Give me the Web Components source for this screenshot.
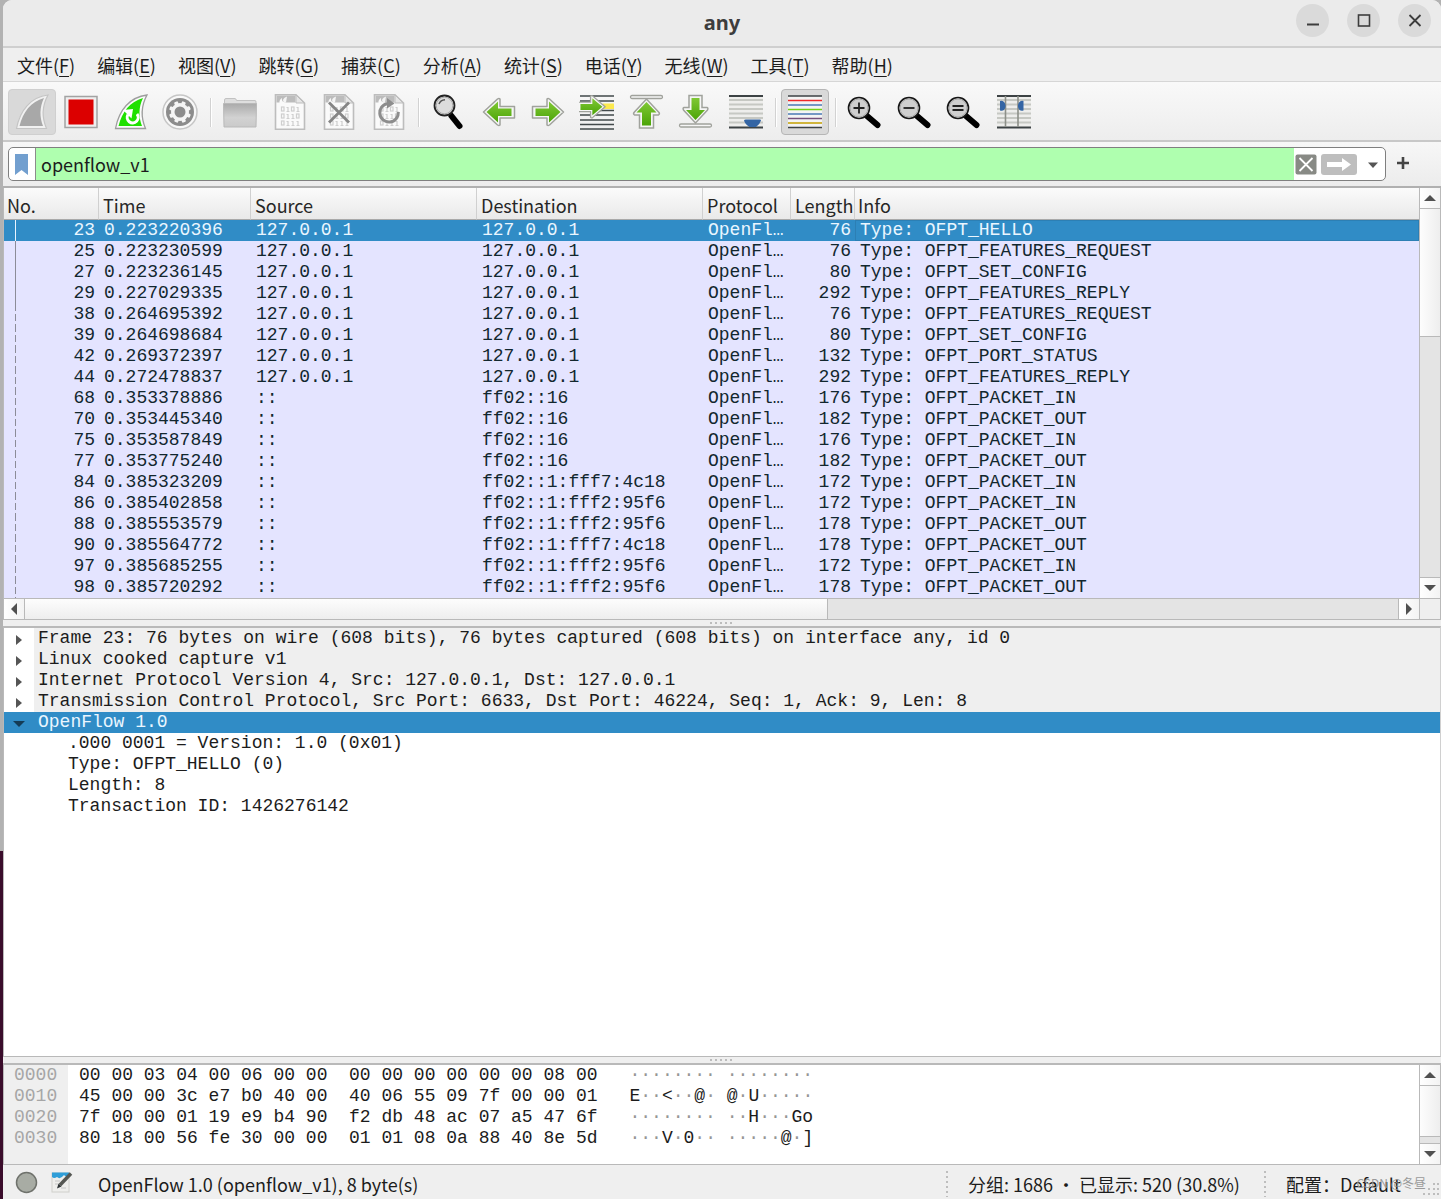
<!DOCTYPE html>
<html lang="zh-CN">
<head>
<meta charset="utf-8">
<title>any</title>
<style>
  html, body { height: 100%; }
  body {
    margin: 0;
    background: linear-gradient(#b2b2b2 0 71%, #3a0c2b 71%);
    font: 18px/26px "Noto Sans CJK SC", "Noto Sans", sans-serif;
    color: #1c1c1c;
    --mono: 18px/21px "Liberation Mono", "Noto Sans CJK SC", monospace;
    --blue: #308cc6;
    --line: #b9b9b9;
    --face: #efefef;
  }
</style>
</head>
<body>
<app-window></app-window>

<script>
const define = (name, html, setup) => {
  const template = document.createElement('template');
  template.innerHTML = `<style>
    *, :host { box-sizing: border-box; }
    button, input, select { font: inherit; color: inherit; margin: 0; padding: 0; border: 0; background: none; }
    svg { display: block; }
  </style>` + html;
  customElements.define(name, class extends HTMLElement {
    connectedCallback() {
      if (this.shadowRoot) return;
      const root = this.attachShadow({ mode: 'open' });
      root.append(template.content.cloneNode(true));
      if (setup) setup(root, this);
    }
  });
};

/* ---------- icons ---------- */
const fin = 'M2.5 34.5C6 16 17 3 34 1C28 12 28 24 32.5 34.5Z';
const finIn = 'M5.5 32C9 18 17 7.5 30 4C25.500 13 25.500 23 29 32Z';
const page = `<path d="M3.500 .8H24L32.500 9V35.200H3.500Z" fill="#fafafa" stroke="#bdbdbd" stroke-width="1.600"/>
  <path d="M4.500 1.500H23.500V8.500H14Q9 8 10 4Q7 6 7.500 8.500H4.500Z" fill="#bcbcbc"/>
  <path d="M12 8.500Q9 5 15 2.500L14 8.500Z" fill="#f4f4f4"/>
  <path d="M24 1V9H32Z" fill="#e6e6e6" stroke="#bdbdbd"/>
  <g fill="none" stroke="#cfcfcf" stroke-width="1.200">
  ${[13, 20, 27].map((y, r) => [9.5, 14.5, 19.5, 24.5].map((x, c) =>
    ['0101', '0110', '0111'][r][c] === '0' ? `<rect x="${x}" y="${y}" width="2.500" height="4"/>` : `<path d="M${x} ${y + .5}h1.500v4m-1.500 0h3"/>`).join('')).join('')}
  </g>`;
const right = 'M1.500 12.500H16V5Q17 4 18.500 5L32.500 18L18.500 31Q17 32 16 31V24H1.500Z';
const rightIn = 'M4.500 14.500H18V7.500L29.500 18L18 28.500V22H4.500Z';
const arrow = t => `<g transform="${t}"><path d="${right}" fill="#f6f6f6" stroke="#a0a29c" stroke-width="1.500" stroke-linejoin="round"/><path d="${rightIn}" fill="url(#g)"/></g>`;
const grad = '<defs><linearGradient id="g" x1="0" y1="0" x2="0" y2="1"><stop offset="0" stop-color="#80c835"/><stop offset="1" stop-color="#4ba407"/></linearGradient></defs>';
const lines = (ys, col, w = 2) => `<path d="${ys.map(y => `M1 ${y}H35`).join('')}" stroke="${col}" stroke-width="${w}"/>`;
const lens = inner => `<path d="M20 22L30.500 31" stroke="#000" stroke-width="6" stroke-linecap="round"/><circle cx="12" cy="14" r="10.500" fill="#cfcfcf" stroke="#161616" stroke-width="1.600"/><circle cx="12" cy="14" r="9" fill="none" stroke="#aaa"/><path d="${inner}" stroke="#222" stroke-width="1.800"/>`;
const teeth = Array.from({ length: 8 }, (_, i) => `<rect x="16" y="7" width="4" height="6" rx="1" transform="rotate(${i * 45 + 22} 18 18)"/>`).join('');

const ICONS = {
  start: `<path d="${fin}" fill="#f1f1f1" stroke="#c4c4c4" stroke-width="1.200"/><path d="${finIn}" fill="#a8a8a8"/>`,
  stop: `<rect x="2" y="2.500" width="32" height="31" fill="#efefef" stroke="#a3a3a3" stroke-width="1.500"/><rect x="5.500" y="5.500" width="25" height="25" fill="#dc0000"/>`,
  restart: `<path d="${fin}" fill="#fafafa" stroke="#9d9d9d" stroke-width="1.300"/><path d="${finIn}" fill="#1fe000"/>
    <path d="M15 20.500A5.500 5.500 0 1 0 24 20" fill="none" stroke="#fff" stroke-width="3"/><path d="M10 16L20 15L18.500 24.500Z" fill="#fff"/>`,
  options: `<circle cx="18" cy="18" r="17" fill="#f8f8f8" stroke="#c6c6c6" stroke-width="1.500"/><circle cx="18" cy="18" r="14" fill="#8c8c8c"/><g fill="#f5f5f5">${teeth}<circle cx="18" cy="18" r="9"/></g><circle cx="18" cy="18" r="5.500" fill="#8c8c8c"/>`,
  open: `<defs><linearGradient id="f" x1="0" y1="0" x2="0" y2="1"><stop offset="0" stop-color="#aaa"/><stop offset=".6" stop-color="#d2d2d2"/><stop offset="1" stop-color="#cacaca"/></linearGradient></defs>
    <path d="M2.500 12V6Q2.500 4.500 4 4.500H13Q14 4.500 14.500 6.500H33Q34 6.500 34 8V12Z" fill="#dedede" stroke="#c2c2c2"/><path d="M1.500 9.500H34.500L34 33H2Z" fill="url(#f)" stroke="#b9b9b9"/>`,
  save: page,
  close: page + '<path d="M8 8.500L28 28.500M28 8.500L8 28.500" stroke="#858585" stroke-width="2.800"/>',
  reload: page + '<path d="M17 9.500A9.300 9.300 0 1 0 27.300 18" fill="none" stroke="#8d8d8d" stroke-width="3"/><path d="M16 4L23.500 9.500L16 14.500Z" fill="#8d8d8d"/>',
  find: `<path d="M20.500 22L28.500 32" stroke="#000" stroke-width="6" stroke-linecap="round"/><circle cx="13.500" cy="11.500" r="10" fill="#dcdcdc" stroke="#222" stroke-width="1.800"/><circle cx="13.500" cy="11.500" r="8.300" fill="none" stroke="#aaa"/><path d="M8 10Q9.500 6 14 5.800" fill="none" stroke="#555" stroke-width="1.500"/>`,
  back: grad + arrow('matrix(-1 0 0 1 36 0)'),
  forward: grad + arrow('translate(1 0)'),
  goto: grad + lines([2, 7, 16.500, 21, 26, 30.500, 35], '#42494b', 1.6) + '<rect x="24" y="9.500" width="11" height="5.500" fill="#fce94f"/>' + arrow('translate(-2.500 -2) scale(.88 .82)'),
  first: grad + '<rect x="1.500" y="1.500" width="32" height="3" rx="1.500" fill="#f6f6f6" stroke="#a0a29c" stroke-width="1.300"/><path d="M10.500 34V21H5.500Q4 20 5 18.500L17.500 5L30 18.500Q31 20 29.500 21H24.500V34Z" fill="#f6f6f6" stroke="#a0a29c" stroke-width="1.500"/><path d="M13 31.500V18.500H7.500L17.500 8L27.500 18.500H22V31.500Z" fill="url(#g)"/>',
  last: grad + '<rect x="1.500" y="30" width="32" height="3" rx="1.500" fill="#f6f6f6" stroke="#a0a29c" stroke-width="1.300"/><path d="M11 1.500V13.500H6Q4.500 14 5.500 16L17.500 29L29.500 16Q30.500 14 29 13.500H24V1.500Z" fill="#f6f6f6" stroke="#a0a29c" stroke-width="1.500"/><path d="M13.500 4V16H8L17.500 26L27 16H21.500V4Z" fill="url(#g)"/>',
  autoscroll: '<rect x="1" y="2" width="34" height="31" fill="#eeeeec"/>' + lines([6, 10.500, 15, 19.500, 24, 28.500], '#c6c8c3', 1.8) + lines([2, 33.500], '#3c4244', 1.8) + '<path d="M16 26.500Q16.500 25 19 25.500H31Q33 25 33 26.500Q32 30 28 33H21.500Q17 30 16 26.500Z" fill="#3465a4"/>',
  colorize: '<rect x="1" y="2" width="34" height="31" fill="#f4f4f4"/>' + [[2, '#3c4244'], [6.5, '#ef2929'], [11, '#4a7ab5'], [15.5, '#73d216'], [20, '#4a7ab5'], [24.5, '#75507b'], [29, '#c4a000'], [33.5, '#3c4244']].map(([y, c]) => lines([y], c, 1.7)).join(''),
  zoomin: lens('M12 8.500V19.500M6.500 14H17.500'),
  zoomout: lens('M6.500 14H17.500'),
  zoomreset: lens('M6.500 12H17.500M6.500 16H17.500'),
  resize: '<rect x="1" y="2" width="34" height="31" fill="#eeeeec"/>' + lines([6, 10.500, 15, 19.500, 24, 28.500], '#c6c8c3', 1.8) + lines([2, 33.500], '#3c4244', 1.8) + '<path d="M9.500 2V33M22 2V33" stroke="#8d9089" stroke-width="1.600"/><path d="M4 7Q8 6 9.500 11V13Q8 18 4 16.500Z M27.500 7Q23.500 6 22 11V13Q23.500 18 27.500 16.500Z" fill="#3465a4"/>'
};
define('ws-icon', `<style>:host { display: block; width: 36px; height: 36px; }</style><svg width="36" height="36" viewBox="0 0 36 36" aria-hidden="true"></svg>`,
  (root, host) => { root.querySelector('svg').innerHTML = ICONS[host.getAttribute('name')]; });

/* ---------- title bar ---------- */
define('title-bar', `<style>
  :host { display: grid; grid-template-columns: 1fr auto 1fr; align-items: center; height: 48px; padding: 0 10px 5px; background: #ebebeb; border-bottom: 2px solid #cfcfcf; }
  h1 { grid-column: 2; margin: 0; padding-top: 4px; font: bold 20px/28px "Noto Sans", sans-serif; color: #3d3d3d; }
  div { display: flex; justify-content: flex-end; gap: 18px; }
  button { width: 33px; height: 33px; border-radius: 50%; background: #dadada; }
</style>
<h1><slot></slot></h1>
<div>
  <button aria-label="最小化"><svg width="33" height="33"><path d="M11 20.500h12" stroke="#3d3d3d" stroke-width="2"/></svg></button>
  <button aria-label="最大化"><svg width="33" height="33"><rect x="11.500" y="11" width="11" height="11" fill="none" stroke="#3d3d3d" stroke-width="1.600"/></svg></button>
  <button aria-label="关闭"><svg width="33" height="33"><path d="M11.500 11l11 11m0-11l-11 11" stroke="#3d3d3d" stroke-width="1.800"/></svg></button>
</div>`);

/* ---------- menu bar ---------- */
define('menu-bar', `<style>
  :host { display: flex; gap: 22px; align-items: center; height: 34px; padding: 0 14px; background: var(--face); border-bottom: 1px solid #d6d6d6; }
  u { text-underline-offset: 3px; text-decoration-thickness: 1px; }
  button { white-space: nowrap; }
</style>`, root => {
  ['文件F', '编辑E', '视图V', '跳转G', '捕获C', '分析A', '统计S', '电话Y', '无线W', '工具T', '帮助H'].forEach(t => {
    const b = document.createElement('button');
    b.innerHTML = `${t.slice(0, 2)}(<u>${t[2]}</u>)`;
    root.append(b);
  });
});

/* ---------- main toolbar ---------- */
define('tool-bar', `<style>
  :host { display: block; padding: 7px 5px 5px; background: linear-gradient(#f9f9f9, #ededed); border-bottom: 2px solid #c8c8c8; }
  div { display: flex; justify-content: space-between; align-items: center; max-width: 1030px; }
  button { display: grid; place-items: center; width: 48px; height: 46px; border: 1px solid transparent; border-radius: 4px; }
  button.on { background: #d9d9d9; border-color: #b6b6b6; }
  button.off { background: #d9d9d9; border-color: #cfcfcf; }
  i { width: 9px; height: 29px; background: linear-gradient(90deg, transparent 4px, #d2d2d2 4px 5px, #fff 5px 6px, transparent 6px); }
</style><div></div>`, root => {
  const names = { start: '开始', stop: '停止', restart: '重新开始', options: '选项', open: '打开', save: '保存', close: '关闭', reload: '重新加载', find: '查找', back: '上一个', forward: '下一个', goto: '转到', first: '首个', last: '末个', autoscroll: '自动滚动', colorize: '着色', zoomin: '放大', zoomout: '缩小', zoomreset: '正常大小', resize: '调整列宽' };
  const after = ['options', 'reload', 'autoscroll', 'colorize'];
  root.querySelector('div').innerHTML = Object.entries(names).map(([n, label]) =>
    `<button aria-label="${label}" class="${n === 'colorize' ? 'on' : n === 'start' ? 'off' : ''}"><ws-icon name="${n}"></ws-icon></button>${after.includes(n) ? '<i></i>' : ''}`).join('');
});

/* ---------- display filter ---------- */
define('filter-bar', `<style>
  :host { display: flex; align-items: center; gap: 10px; height: 46px; padding: 0 31px 0 5px; background: linear-gradient(#f7f7f7, #ececec); border-bottom: 2px solid #b0b0b0; }
  .box { flex: 1; display: flex; align-items: center; height: 34px; border: 1px solid #7f7f7f; border-radius: 5px; background: #fff; overflow: hidden; }
  .mark { width: 27px; height: 32px; border-right: 1px solid #8c8c8c; padding-left: 6px; }
  input { flex: 1; min-width: 0; height: 32px; padding: 0 5px; background: #afffaf; outline: 0; }
  .clear { margin-left: 1px; } .apply { margin-left: 4px; } .drop { padding: 0 5px 0 9px; }
</style>
<div class="box">
  <button class="mark" aria-label="书签"><svg width="13" height="21"><path d="M0 0H13V21L6.500 16L0 21Z" fill="#729fcf"/></svg></button>
  <input aria-label="显示过滤器" value="openflow_v1" spellcheck="false">
  <button class="clear" aria-label="清除"><svg width="22" height="21"><rect x=".5" y=".5" width="21" height="20" rx="2" fill="#888a85"/><path d="M4.500 4L17.500 17M17.500 4L4.500 17" stroke="#fff" stroke-width="1.800"/></svg></button>
  <button class="apply" aria-label="应用"><svg width="36" height="21"><rect width="36" height="21" rx="3" fill="#bebebe"/><path d="M6 8H21V4L30 10.500L21 17V13H6Z" fill="#fff"/></svg></button>
  <button class="drop" aria-label="历史"><svg width="14" height="21"><path d="M2 8.500H12L7 14Z" fill="#555"/></svg></button>
</div>
<button aria-label="添加"><svg width="14" height="18"><path d="M7 2V14M1 8H13" stroke="#444" stroke-width="2.600"/></svg></button>`);

/* ---------- scroll bar ---------- */
define('scroll-bar', `<style>
  :host { display: flex; flex-direction: column; width: 22px; background: #e4e4e4; border-left: 1px solid var(--line); border-right: 1px solid var(--line); }
  :host([horizontal]) { flex-direction: row; width: auto; height: 22px; border: 0; border-top: 1px solid var(--line); border-bottom: 1px solid var(--line); }
  button { flex: none; display: grid; place-items: center; width: 20px; height: 20px; background: linear-gradient(90deg, #fff, #f3f3f3); }
  svg { width: 12px; height: 12px; fill: #505050; }
  .track { flex: 1; display: flex; flex-direction: inherit; }
  .thumb { flex: 0 0 var(--size, 50%); background: linear-gradient(90deg, #fdfdfd, #eee); border: 1px solid var(--line); border-width: 1px 0; }
  :host([horizontal]) .thumb { background: linear-gradient(#fdfdfd, #eee); border-width: 0 1px; }
  .end { border-top: 1px solid var(--line); height: 21px; }
  :host([horizontal]) .end { border-top: 0; border-left: 1px solid var(--line); width: 21px; height: 20px; }
  :host([horizontal]) svg { transform: rotate(-90deg); }
</style>
<button aria-label="-" tabindex="-1"><svg viewBox="0 0 12 12"><path d="M0 9H12L6 3Z"/></svg></button>
<div class="track"><div class="thumb"></div></div>
<button class="end" aria-label="+" tabindex="-1"><svg viewBox="0 0 12 12"><path d="M0 3H12L6 9Z"/></svg></button>`);

define('pane-splitter', `<style>
  :host { display: grid; place-items: center; height: 6px; background: var(--face); }
  i { width: 25px; height: 2px; background: repeating-linear-gradient(90deg, #bcbcbc 0 2px, transparent 2px 5px); }
</style><i></i>`);

/* ---------- packet list ---------- */
define('packet-list', `<style>
  :host { display: grid; grid-template-columns: 1fr 22px; background: var(--face); border-left: 1px solid var(--line); }
  table { width: 100%; table-layout: fixed; border-collapse: separate; border-spacing: 0; background: #e4e4ff; font: var(--mono); color: #12272e; }
  th { height: 32px; padding: 2px 0 0 4px; text-align: left; font: 18px/26px "Noto Sans CJK SC", sans-serif; color: #262626; background: linear-gradient(#fbfbfb, #e9e9e9); border-right: 1px solid #d0d0d0; border-bottom: 1px solid #a9a9a9; white-space: nowrap; }
  th:first-child { padding-left: 3px; }
  th:nth-child(7) { border-right: 0; padding-left: 3px; }
  td { height: 21px; padding: 0 0 0 5px; white-space: nowrap; overflow: hidden; }
  td:first-child, td:nth-child(6) { text-align: right; padding: 0 4px 0 0; }
  td:first-child { background: repeating-linear-gradient(#8c8c98 0 7px, transparent 7px 10px) 11px 0 / 1px 100% no-repeat; }
  tr.linked td:first-child { background: linear-gradient(#8c8c98, #8c8c98) 11px 0 / 1px 100% no-repeat; }
  tr.sel { background: var(--blue); color: #eaf6ff; }
  tr.sel td:first-child { background: linear-gradient(#e8f4ff, #e8f4ff) 11px 0 / 1px 100% no-repeat; }
  tr.sel td:last-child { box-shadow: inset 0 0 0 1px #2c7fb4; }
  scroll-bar { --size: 35%; }
  scroll-bar[horizontal] { --size: 58.5%; }
  .corner { border: 1px solid var(--line); }
</style>
<table>
  <colgroup><col style="width:95px"><col style="width:152px"><col style="width:226px"><col style="width:226px"><col style="width:88px"><col style="width:64px"><col></colgroup>
  <thead><tr><th>No.</th><th>Time</th><th>Source</th><th>Destination</th><th>Protocol</th><th>Length</th><th>Info</th></tr></thead>
  <tbody></tbody>
</table>
<scroll-bar></scroll-bar>
<scroll-bar horizontal></scroll-bar>
<div class="corner"></div>`, root => {
  const L = '127.0.0.1', A = 'ff02::1:fff7:4c18', B = 'ff02::1:fff2:95f6', M = 'ff02::16', N = '::';
  const rows = [
    [23, '0.223220396', L, L, 76, 'HELLO'], [25, '0.223230599', L, L, 76, 'FEATURES_REQUEST'],
    [27, '0.223236145', L, L, 80, 'SET_CONFIG'], [29, '0.227029335', L, L, 292, 'FEATURES_REPLY'],
    [38, '0.264695392', L, L, 76, 'FEATURES_REQUEST'], [39, '0.264698684', L, L, 80, 'SET_CONFIG'],
    [42, '0.269372397', L, L, 132, 'PORT_STATUS'], [44, '0.272478837', L, L, 292, 'FEATURES_REPLY'],
    [68, '0.353378886', N, M, 176, 'PACKET_IN'], [70, '0.353445340', N, M, 182, 'PACKET_OUT'],
    [75, '0.353587849', N, M, 176, 'PACKET_IN'], [77, '0.353775240', N, M, 182, 'PACKET_OUT'],
    [84, '0.385323209', N, A, 172, 'PACKET_IN'], [86, '0.385402858', N, B, 172, 'PACKET_IN'],
    [88, '0.385553579', N, B, 178, 'PACKET_OUT'], [90, '0.385564772', N, A, 178, 'PACKET_OUT'],
    [97, '0.385685255', N, B, 172, 'PACKET_IN'], [98, '0.385720292', N, B, 178, 'PACKET_OUT']];
  root.querySelector('tbody').innerHTML = rows.map(([no, t, s, d, len, type], i) =>
    `<tr class="${i === 0 ? 'sel' : i < 4 ? 'linked' : ''}"><td>${no}</td><td>${t}</td><td>${s}</td><td>${d}</td><td>OpenFl…</td><td>${len}</td><td>Type: OFPT_${type}</td></tr>`).join('');
});

/* ---------- packet details ---------- */
define('detail-tree', `<style>
  :host { display: block; background: #fff; border: 1px solid var(--line); border-top-width: 2px; border-right-color: #d0d0d0; font: var(--mono); color: #1c1c1c; overflow: hidden; }
  .row { display: flex; height: 21px; white-space: nowrap; }
  .row button { width: 30px; display: grid; place-items: center; }
  .row span { flex: 1; padding-left: 4px; background: var(--face); }
  .row.sel { background: var(--blue); color: #eaf6ff; }
  .row.sel span { background: none; }
  .leaf { padding-left: 64px; height: 21px; white-space: nowrap; }
</style>
<div role="tree"></div>`, root => {
  const closed = '<svg width="12" height="14"><path d="M3 3V13L9 8Z" fill="#555"/></svg>';
  const open = '<svg width="12" height="14"><path d="M0 5H12L6 11Z" fill="#143c56"/></svg>';
  const row = (t, sel) => `<div role="treeitem" class="row${sel ? ' sel' : ''}"><button aria-label="展开">${sel ? open : closed}</button><span>${t}</span></div>`;
  root.querySelector('div').innerHTML =
    row('Frame 23: 76 bytes on wire (608 bits), 76 bytes captured (608 bits) on interface any, id 0') +
    row('Linux cooked capture v1') +
    row('Internet Protocol Version 4, Src: 127.0.0.1, Dst: 127.0.0.1') +
    row('Transmission Control Protocol, Src Port: 6633, Dst Port: 46224, Seq: 1, Ack: 9, Len: 8') +
    row('OpenFlow 1.0', true) +
    ['.000 0001 = Version: 1.0 (0x01)', 'Type: OFPT_HELLO (0)', 'Length: 8', 'Transaction ID: 1426276142'].map(t => `<div role="treeitem" class="leaf">${t}</div>`).join('');
});

/* ---------- packet bytes ---------- */
define('hex-view', `<style>
  :host { display: flex; height: 102px; border: 1px solid var(--line); border-top-width: 2px; border-right: 0; background: linear-gradient(90deg, #efefef 64px, #fff 64px); }
  .view { flex: 1; min-width: 0; }
  table { border-spacing: 0; font: var(--mono); color: #1c1c1c; }
  td { height: 21px; padding: 0; white-space: pre; }
  td:nth-child(1) { width: 75px; padding-left: 10px; color: #a6a6a6; }
  td:nth-child(2) { padding-right: 32px; }
  .dot { color: #969696; }
  scroll-bar { --size: 90%; }
</style>
<div class="view"><table><tbody></tbody></table></div><scroll-bar></scroll-bar>`, root => {
  const rows = [
    ['0000', '00 00 03 04 00 06 00 00  00 00 00 00 00 00 08 00', '········ ········'],
    ['0010', '45 00 00 3c e7 b0 40 00  40 06 55 09 7f 00 00 01', 'E··&lt;··@· @·U·····'],
    ['0020', '7f 00 00 01 19 e9 b4 90  f2 db 48 ac 07 a5 47 6f', '········ ··H···Go'],
    ['0030', '80 18 00 56 fe 30 00 00  01 01 08 0a 88 40 8e 5d', '···V·0·· ·····@·]']];
  root.querySelector('tbody').innerHTML = rows.map(([o, h, a]) =>
    `<tr><td>${o}</td><td>${h}</td><td>${a.replace(/·+/g, '<span class="dot">$&</span>')}</td></tr>`).join('');
});

/* ---------- status bar ---------- */
define('status-bar', `<style>
  :host { display: flex; align-items: center; height: 34px; padding: 4px 2px 0 12px; background: var(--face); white-space: nowrap; position: relative; }
  button { flex: none; }
  .expert { margin-bottom: 4px; } .note { margin: 0 25px 4px 13px; }
  .text { flex: 1; }
  .grip { width: 2px; height: 26px; background: repeating-linear-gradient(#bdbdbd 0 2px, transparent 2px 5px); }
  .packets { width: 316px; padding-left: 20px; }
  .profile { width: 155px; padding-left: 20px; text-align: left; }
  .size { align-self: flex-end; }
  .mark { position: absolute; right: 15px; top: 8px; font-size: 12px; line-height: 20px; color: #9a9a9a; }
</style>
<button class="expert" aria-label="专家信息"><svg width="23" height="23"><circle cx="11.500" cy="11.500" r="10" fill="#a8aca4" stroke="#6f726c" stroke-width="1.500"/></svg></button>
<button class="note" aria-label="捕获文件注释"><svg width="22" height="22"><rect x="1" y="2" width="17" height="19" fill="#eeeeec" stroke="#d0d0cc"/><path d="M1 1.500H18V5Q15 7 13 4Q9 9 6 6Q3 8 1 6Z" fill="#2f9ed8"/><path d="M4 10H9M4 13H7M10 17H15" stroke="#c4c4c4"/><path d="M20 2.500L9 14" stroke="#555753" stroke-width="3.500"/><path d="M10.500 15.500L6 17.500L7.500 12.500Z" fill="#2e3436"/></svg></button>
<span class="text">OpenFlow 1.0 (openflow_v1), 8 byte(s)</span>
<i class="grip"></i><span class="packets">分组: 1686 · 已显示: 520 (30.8%)</span>
<i class="grip"></i><button class="profile">配置：Default</button>
<svg class="size" width="18" height="18" fill="#bdbdbd"><path d="M12 2h2v2h-2zM16 2h2v2h-2zM7 7h2v2h-2zM12 7h2v2h-2zM16 7h2v2h-2zM2 12h2v2h-2zM7 12h2v2h-2zM12 12h2v2h-2zM16 12h2v2h-2z"/></svg>
<span class="mark">CSDN @冬昼</span>`);

/* ---------- window ---------- */
define('app-window', `<style>
  :host { display: block; height: 100vh; padding-left: 3px; }
  main { display: flex; flex-direction: column; height: 100%; background: var(--face); border-radius: 9px 9px 0 0; overflow: hidden; }
  main > * { flex: none; }
  detail-tree { flex: 1 1 0; min-height: 0; }
</style>
<main>
  <title-bar>any</title-bar>
  <menu-bar></menu-bar>
  <tool-bar></tool-bar>
  <filter-bar></filter-bar>
  <packet-list></packet-list>
  <pane-splitter></pane-splitter>
  <detail-tree></detail-tree>
  <pane-splitter></pane-splitter>
  <hex-view></hex-view>
  <status-bar></status-bar>
</main>`);
</script>
</body>
</html>
